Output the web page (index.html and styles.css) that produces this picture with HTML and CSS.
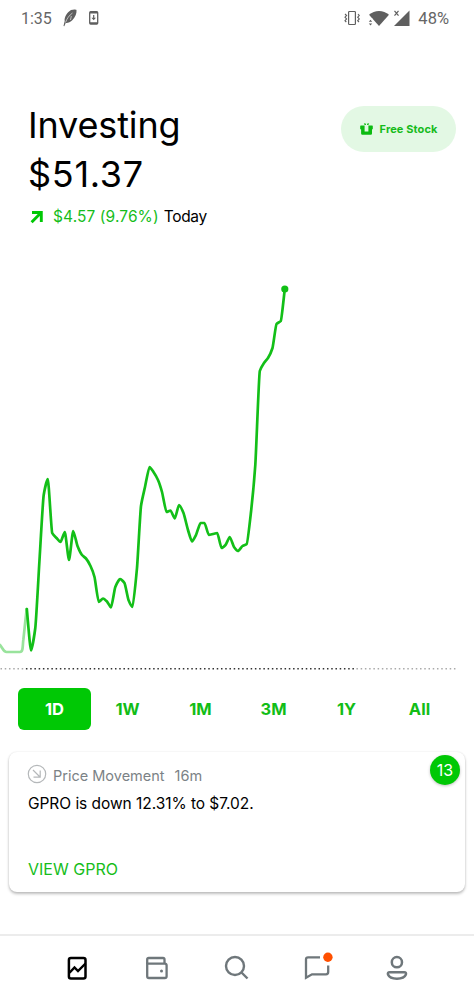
FILE: index.html
```html
<!DOCTYPE html>
<html lang="en">
<head>
  <meta charset="UTF-8">
  <meta name="viewport" content="width=device-width, initial-scale=1.0">
  <title>Investing</title>
  <link rel="stylesheet" href="styles.css">
</head>
<body>
  <div class="status-bar">
    <span class="time">1:35</span>
    <svg class="feather" width="14" height="18" viewBox="0 0 14 18">
      <path fill="#5f5f5f" d="M0.500 17 L1.700 12 C1 8 4.500 3 8 1 C10.500 0.200 13 0.300 13.500 1 C13.800 4 12.500 8 9.500 11 C7.500 13.300 4.500 14.300 2.700 14 L1.300 17.200 Z"/>
      <path fill="none" stroke="#fff" stroke-width="0.600" d="M2.500 13.500 C4 9.500 6 6.500 9.500 4 M8.300 7 L7.500 11"/>
    </svg>
    <svg class="update" width="10" height="14" viewBox="0 0 10 14">
      <rect x="0.700" y="0.700" width="8" height="12.400" rx="1" fill="none" stroke="#5f5f5f" stroke-width="1.300"/>
      <path d="M1 1.600 H8.500 M1 12.200 H8.500" stroke="#5f5f5f" stroke-width="1.800"/>
      <path d="M4.700 4 V8" stroke="#5f5f5f" stroke-width="1.200"/>
      <path d="M2.500 6.800 H6.900 L4.700 9.300 Z" fill="#5f5f5f"/>
    </svg>
    <span class="spacer"></span>
    <svg class="vibrate" width="16" height="16" viewBox="0 0 16 16" fill="none" stroke="#5f5f5f">
      <rect x="4.600" y="1.500" width="6.800" height="13" rx="0.800" stroke-width="1.200"/>
      <path stroke-width="1.100" d="M1 4 L2.600 5.500 L1 7.200 L2.600 9 L1 10.700 L2.300 12 M14 4 L15.300 5.500 L13.700 7.200 L15.300 9 L13.700 10.700 L15 12"/>
    </svg>
    <svg class="wifi" width="22" height="17" viewBox="0 0 22 17" fill="#5f5f5f">
      <path d="M1 4.800 C6.500 -0.300 15.500 -0.300 21 4.800 L11 16 Z"/>
      <path d="M0.200 8.500 H4.600 V17 H0.200 Z" fill="#fff"/>
      <path d="M0.800 11.800 L2.500 9.800 L4.200 11.800 Z M0.800 13.500 L2.500 15.500 L4.200 13.500 Z"/>
    </svg>
    <svg class="signal" width="17" height="17" viewBox="0 0 17 17">
      <path fill="#5f5f5f" d="M16.500 0.500 V16 H1 Z"/>
      <path fill="#fff" d="M0 0 H7 V7.500 H0 Z"/>
      <path stroke="#5f5f5f" stroke-width="1.200" d="M1.500 0.800 L5.500 5.600 M5.500 0.800 L1.500 5.600"/>
    </svg>
    <span class="battery">48%</span>
  </div>

  <header class="header">
    <div>
      <h1 class="title">Investing</h1>
      <div class="amount">$51.37</div>
      <div class="change">
        <svg width="14" height="14" viewBox="0 0 14 14" fill="none" stroke="#00c805" stroke-width="2.900">
          <path d="M2 2.500 H11.300 V12 M11 2.800 L1.600 12.200"/>
        </svg>
        <span class="gain">$4.57 (9.76%)</span>
        <span class="period">Today</span>
      </div>
    </div>
    <button class="free-stock">
      <svg width="13" height="12" viewBox="0 0 13 12" fill="#0cbb11">
        <path d="M0.800 2.500 H4.600 V8.500 H8.400 V2.500 H12.200 Q12.800 2.500 12.800 3.200 V6.200 H12 V10.500 Q12 11.700 10.800 11.700 H2.300 Q1.100 11.700 1.100 10.500 V6.200 H0.200 V3.200 Q0.200 2.500 0.800 2.500 Z"/>
        <path d="M3.800 0.300 L6.100 0.700 L5.800 2 H4.600 Z M9.200 0.300 L6.900 0.700 L7.200 2 H8.400 Z"/>
      </svg>
      <span>Free Stock</span>
    </button>
  </header>

  <svg class="chart" width="474" height="440" viewBox="0 240 474 440">
    <g fill="none" stroke-width="2.700" stroke-linecap="round" stroke-linejoin="round">
      <path stroke="#99e39c" d="M0 645 C2 647 3.500 652 6.500 652 H20 C23.500 652 22.500 645 23.300 640 C24.500 630 25.500 618 26.800 609"/>
      <path class="line" stroke="#13bf18"/>
    </g>
    <circle cx="284.800" cy="289" r="3.600" fill="#10c015"/>
    <path stroke="#aaa" stroke-width="1.500" stroke-dasharray="1.500 2.740" d="M0.500 668.800 H26"/>
    <path stroke="#333" stroke-width="1.500" stroke-dasharray="1.500 2.740" d="M25.940 668.800 H355"/>
    <path stroke="#aaa" stroke-width="1.500" stroke-dasharray="1.500 2.740" d="M356.420 668.800 H456"/>
  </svg>

  <div class="ranges">
    <button class="range active">1D</button>
    <button class="range">1W</button>
    <button class="range">1M</button>
    <button class="range">3M</button>
    <button class="range">1Y</button>
    <button class="range">All</button>
  </div>

  <section class="card">
    <div class="card-head">
      <svg width="20" height="20" viewBox="0 0 20 20" fill="none" stroke="#b5b8ba" stroke-width="1.200">
        <circle cx="10" cy="10" r="8.700"/>
        <path d="M6 6 L13 13 M13.200 6.500 V13.200 H6.500"/>
      </svg>
      <span class="card-title">Price Movement</span>
      <span class="card-age">16m</span>
    </div>
    <p class="card-text">GPRO is down 12.31% to $7.02.</p>
    <a class="card-link">VIEW GPRO</a>
    <span class="badge">13</span>
  </section>

  <nav class="nav">
    <svg width="28" height="28" viewBox="0 0 28 28" fill="none" stroke="#000" stroke-width="2.500">
      <rect x="5.900" y="3" width="16.600" height="20.400" rx="2"/>
      <path d="M6.500 17.800 L11.500 12.500 L15 16 L22.500 8.500" stroke-width="2.400"/>
    </svg>
    <svg width="28" height="28" viewBox="0 0 28 28" fill="none" stroke="#6f777b" stroke-width="2.300">
      <path d="M4.200 9 V4.500 Q4.200 3 5.700 3 H20 Q21.500 3 21.500 4.500 V8.200"/>
      <path d="M4.200 8.700 H21.700 Q23.600 8.700 23.600 10.500 V21.200 Q23.600 23 21.800 23 H6 Q4.200 23 4.200 21.200 Z"/>
      <circle cx="18.500" cy="16" r="1.500" fill="#6f777b" stroke="none"/>
    </svg>
    <svg width="28" height="28" viewBox="0 0 28 28" fill="none" stroke="#6f777b" stroke-width="2.400">
      <circle cx="12" cy="11" r="9"/>
      <path d="M18.500 17.500 L24.500 23.500"/>
    </svg>
    <svg width="28" height="28" viewBox="0 0 28 28" fill="none" stroke="#6f777b" stroke-width="2.300">
      <path d="M17 2.300 H5 Q3 2.300 3 4.300 V22.800 L9 19.300 H23 Q25.200 19.300 25.200 17 V10.500"/>
      <circle cx="24.900" cy="2.200" r="4.700" fill="#ff5000" stroke="none"/>
    </svg>
    <svg width="28" height="28" viewBox="0 0 28 28" fill="none" stroke="#6f777b" stroke-width="2.500">
      <circle cx="13.900" cy="7.200" r="5.100"/>
      <path d="M6.700 17.300 H21.200 Q23.500 17.300 22.900 19.500 C20.700 25 7.200 25 5 19.500 Q4.400 17.300 6.700 17.300 Z"/>
    </svg>
  </nav>

  <script>
    // Portfolio value over the day, in chart coordinates
    const points = [
      [26.8,609],[31,650.5],[35.3,628],[39.5,560],[43.7,495],[47.8,479],[52.2,533],[56.5,538],
      [60.5,542],[64.8,532],[69,560],[73.2,531],[77.5,546],[82,555],[86,558.5],[90.5,566],
      [94.5,577],[98.7,602],[103,598.5],[107,601.5],[111,607.5],[115.3,587],[120,579],[124.5,583],
      [128.5,600],[132.5,607],[137,568],[141,506],[145,487],[149.5,467],[153.5,472],[158,480],
      [162,492],[166.5,512],[170.5,510.5],[174.8,518.5],[179,505],[183.5,513],[188,530],[192,541.5],
      [196,535],[200.5,523],[204.5,523],[208.8,535],[213,534],[217.3,533],[221.5,548],[225.5,545],
      [229.8,537],[234,547],[238,551],[242.5,546],[246.7,544],[251,512],[255.3,465],[259.8,371],
      [264,363],[268,358],[272.5,348],[276.5,324],[280.8,321],[284.8,289]
    ];

    // Slope at each point, flat where the line turns around
    const slopes = points.map((p, i) => {
      if (i === 0 || i === points.length - 1) return null;
      const a = (p[1] - points[i - 1][1]) / (p[0] - points[i - 1][0]);
      const b = (points[i + 1][1] - p[1]) / (points[i + 1][0] - p[0]);
      return a * b <= 0 ? 0 : 2 * a * b / (a + b);
    });

    let d = `M${points[0]}`;
    for (let i = 1; i < points.length; i++) {
      const [x0, y0] = points[i - 1];
      const [x1, y1] = points[i];
      const h = (x1 - x0) / 5;
      const line = (y1 - y0) / (x1 - x0);
      const m0 = slopes[i - 1] ?? line;
      const m1 = slopes[i] ?? line;
      d += ` C${x0 + h} ${y0 + m0 * h} ${x1 - h} ${y1 - m1 * h} ${x1} ${y1}`;
    }
    document.querySelector('.line').setAttribute('d', d);
  </script>
</body>
</html>
```
FILE: styles.css
```css
* {
  box-sizing: border-box;
}

body {
  display: flex;
  flex-direction: column;
  width: 474px;
  height: 1000px;
  margin: 0;
  overflow: hidden;
  background-color: #fff;
  color: #000;
  font-family: Inter, "Liberation Sans", sans-serif;
}

svg {
  display: block;
  flex: none;
}

button {
  border: 0;
  padding: 0;
  background: none;
  font-family: inherit;
}

.status-bar {
  display: flex;
  align-items: center;
  height: 36px;
  padding: 0 25px 0 21px;
  color: #666;
  font-family: Roboto, sans-serif;
  font-size: 16px;
}

.feather {
  margin-left: 11px;
}

.update {
  margin-left: 12px;
}

.spacer {
  flex: 1;
}

.wifi {
  margin-left: 8px;
}

.signal {
  margin-left: 3px;
}

.battery {
  margin-left: 8px;
  font-size: 16.5px;
}

.header {
  display: flex;
  justify-content: space-between;
  height: 204px;
  padding: 65px 18px 0 28px;
}

.title,
.amount {
  margin: 0;
  font-size: 36px;
  font-weight: 400;
  line-height: 49px;
}

.title {
  letter-spacing: -0.15px;
}

.amount {
  letter-spacing: 0.7px;
}

.change {
  display: flex;
  align-items: center;
  margin-top: 8px;
  margin-left: 2px;
  font-size: 15.5px;
  line-height: 20px;
}

.gain {
  margin-left: 9px;
  color: #16bd1b;
  letter-spacing: 0.1px;
}

.period {
  margin-left: 5px;
  letter-spacing: -0.3px;
}

.free-stock {
  display: flex;
  align-items: center;
  justify-content: center;
  gap: 7px;
  width: 115px;
  height: 46px;
  margin-top: 5px;
  border-radius: 23px;
  background-color: #e3f8e4;
  color: #16bb1b;
  font-size: 11px;
  font-weight: 700;
  letter-spacing: 0.1px;
}

.ranges {
  display: grid;
  grid-template-columns: repeat(6, 73px);
  height: 42px;
  margin: 8px 18px 0;
}

.range {
  border-radius: 6px;
  color: #12bd17;
  font-size: 16.5px;
  font-weight: 700;
}

.range.active {
  background-color: #00c805;
  color: #fff;
}

.card {
  position: relative;
  height: 140px;
  margin: 22px 9px 0;
  padding: 12px 18px 0 19px;
  border-radius: 8px;
  background-color: #fff;
  box-shadow: 0 2px 3px rgba(0, 0, 0, 0.25), 0 0 2px rgba(0, 0, 0, 0.1);
}

.card-head {
  display: flex;
  align-items: center;
  height: 20px;
  margin-left: -1px;
  color: #7b8286;
  font-size: 14.5px;
}

.card-title {
  margin: 3px 0 0 6px;
}

.card-age {
  margin: 3px 0 0 10px;
}

.card-text {
  margin: 10px 0 0;
  font-size: 15.5px;
  letter-spacing: -0.05px;
  line-height: 20px;
}

.card-link {
  display: block;
  margin-top: 45px;
  color: #16bd1b;
  font-size: 16px;
  line-height: 20px;
}

.badge {
  position: absolute;
  top: 3px;
  right: 5px;
  width: 30px;
  height: 30px;
  border-radius: 50%;
  background-color: #00c805;
  box-shadow: 0 1px 3px rgba(0, 0, 0, 0.25);
  color: #fff;
  font-size: 16px;
  line-height: 30px;
  text-align: center;
}

.nav {
  display: flex;
  justify-content: space-between;
  height: 66px;
  margin-top: auto;
  padding: 19px 63px 0;
  border-top: 2px solid #ececec;
}

.nav svg {
  overflow: visible;
}
```
